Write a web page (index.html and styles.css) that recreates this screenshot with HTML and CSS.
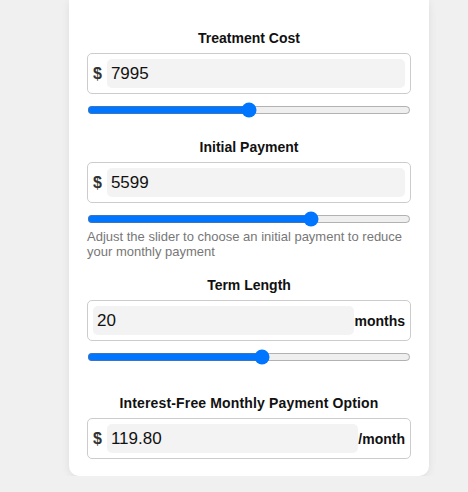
FILE: index.html
```html
<!DOCTYPE html>
<html>
<head>
<meta charset="utf-8">
<link rel="stylesheet" href="styles.css">
</head>
<body>
<div class="page">
  <div class="card">
    <div class="group">
      <div class="label">Treatment Cost</div>
      <div class="field-box">
        <span class="prefix">$</span>
        <input class="field" type="text" value="7995">
      </div>
      <input class="slider" type="range" min="0" max="100" value="50">
    </div>

    <div class="group with-hint">
      <div class="label">Initial Payment</div>
      <div class="field-box">
        <span class="prefix">$</span>
        <input class="field" type="text" value="5599">
      </div>
      <input class="slider" type="range" min="0" max="7995" value="5599">
      <p class="hint">Adjust the slider to choose an initial payment to reduce your monthly payment</p>
    </div>

    <div class="group">
      <div class="label">Term Length</div>
      <div class="field-box">
        <input class="field" type="text" value="20">
        <span class="suffix">months</span>
      </div>
      <input class="slider" type="range" min="1" max="36" value="20">
    </div>

    <div class="group result">
      <div class="label wide">Interest-Free Monthly Payment Option</div>
      <div class="field-box">
        <span class="prefix">$</span>
        <input class="field" type="text" value="119.80">
        <span class="suffix">/month</span>
      </div>
    </div>
  </div>
</div>
</body>
</html>
```

FILE: styles.css
```css
html, body {
  margin: 0;
  padding: 0;
}

body {
  background: #f0f0f0;
  font-family: "Liberation Sans", Arial, sans-serif;
  color: #111;
}

.page {
  padding-left: 69px;
}

.card {
  width: 360px;
  box-sizing: border-box;
  height: 476px;
  background: #fff;
  border-radius: 0 0 10px 10px;
  box-shadow: 0 2px 8px rgba(0, 0, 0, 0.08);
  padding: 30px 18px 17px;
}

.group {
  margin-bottom: 21px;
}

.group.with-hint {
  margin-bottom: 18px;
}

.group.result {
  margin-top: 30px;
  margin-bottom: 0;
}

.label {
  font-size: 14px;
  font-weight: bold;
  line-height: 16px;
  text-align: center;
  margin-bottom: 7px;
  color: #111;
}

.label.wide {
  letter-spacing: 0.15px;
}

.field-box {
  display: flex;
  align-items: center;
  border: 1px solid #ccc;
  border-radius: 5px;
  padding: 5px;
  height: 29px;
}

.prefix {
  font-size: 16px;
  font-weight: bold;
  color: #333;
  margin-right: 5px;
}

.suffix {
  font-size: 14px;
  font-weight: bold;
  color: #111;
}

.field {
  flex: 1;
  min-width: 0;
  height: 29px;
  box-sizing: border-box;
  border: none;
  outline: none;
  background: #f3f3f3;
  border-radius: 5px;
  padding: 0 4px;
  margin: 0;
  font-family: "Liberation Sans", Arial, sans-serif;
  font-size: 17px;
  color: #111;
}

.slider {
  display: block;
  width: 100%;
  margin: 8px 0 0;
  height: 16px;
}

.hint {
  margin: 2px 0 0;
  font-size: 13px;
  line-height: 15px;
  color: #777;
}
```
